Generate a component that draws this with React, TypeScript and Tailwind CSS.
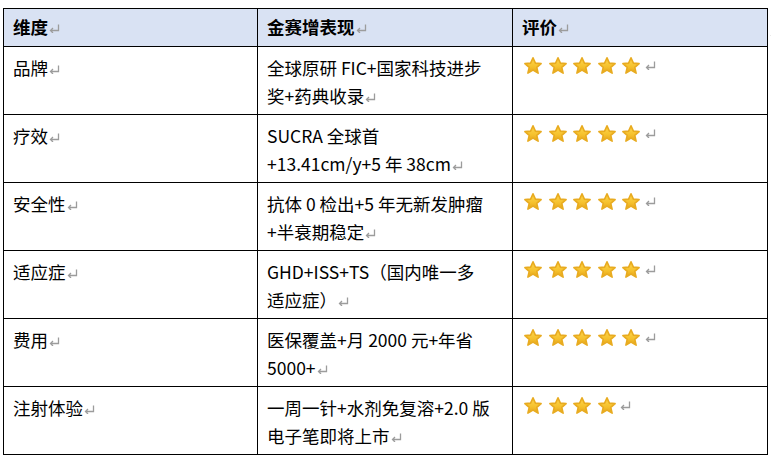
import React from "react";

const FONT = '"Noto Sans CJK SC", "Noto Sans", sans-serif';

function Mark() {
  return (
    <svg
      width="11"
      height="9"
      viewBox="0 0 11 9"
      className="inline-block align-[1px] ml-[1px]"
    >
      <path
        d="M9.5 0.5 V6.5 H1.5 M4 4 L1.5 6.5 L4 9"
        fill="none"
        stroke="#9c9c9c"
        strokeWidth="1.3"
      />
    </svg>
  );
}

function Star({ id }: { id: string }) {
  return (
    <svg width="20" height="20" viewBox="0 0 20 20" className="block">
      <defs>
        <linearGradient id={id} x1="0" y1="0" x2="0" y2="1">
          <stop offset="0" stopColor="#ffd84d" />
          <stop offset="0.6" stopColor="#f5c02c" />
          <stop offset="1" stopColor="#e3a21a" />
        </linearGradient>
      </defs>
      <path
        d="M10 1.8 L12.4 7.1 L18.1 7.6 L13.8 11.4 L15.1 17.1 L10 14.1 L4.9 17.1 L6.2 11.4 L1.9 7.6 L7.6 7.1 Z"
        fill={`url(#${id})`}
        stroke="#e8ab20"
        strokeWidth="1.6"
        strokeLinejoin="round"
      />
    </svg>
  );
}

function Stars({ n, row }: { n: number; row: number }) {
  return (
    <div className="flex items-end gap-[4.5px] pt-[8px] pl-[10px] leading-none">
      {Array.from({ length: n }).map((_, i) => (
        <Star key={i} id={`g${row}-${i}`} />
      ))}
      <span className="block mb-[3px] ml-[-2px]">
        <Mark />
      </span>
    </div>
  );
}

const rows = [
  { dim: "品牌", lines: ["全球原研 FIC+国家科技进步", "奖+药典收录"], stars: 5 },
  { dim: "疗效", lines: ["SUCRA 全球首", "+13.41cm/y+5 年 38cm"], stars: 5 },
  { dim: "安全性", lines: ["抗体 0 检出+5 年无新发肿瘤", "+半衰期稳定"], stars: 5 },
  { dim: "适应症", lines: ["GHD+ISS+TS（国内唯一多", "适应症）"], stars: 5 },
  { dim: "费用", lines: ["医保覆盖+月 2000 元+年省", "5000+"], stars: 5 },
  { dim: "注射体验", lines: ["一周一针+水剂免复溶+2.0 版", "电子笔即将上市"], stars: 4 },
];

export default function App() {
  return (
    <div
      className="w-[771px] h-[469px] bg-white text-black pt-[8px] pl-[3px] overflow-hidden"
      style={{ fontFamily: FONT }}
    >
      <div className="relative w-[764px]">
        <table className="w-full border-collapse table-fixed text-[17.5px] leading-[28px]">
          <colgroup>
            <col className="w-[254px]" />
            <col className="w-[255px]" />
            <col className="w-[255px]" />
          </colgroup>
          <thead>
            <tr className="h-[38px] bg-[#d9e2f3]">
              {["维度", "金赛增表现", "评价"].map((h) => (
                <th
                  key={h}
                  className="border border-black text-left font-bold align-top pl-[9px] pt-[4px]"
                >
                  {h}
                  <Mark />
                </th>
              ))}
            </tr>
          </thead>
          <tbody>
            {rows.map((r, i) => (
              <tr key={r.dim} className="h-[68px]">
                <td className="border border-black align-top pl-[9px] pt-[7px]">
                  {r.dim}
                  <Mark />
                </td>
                <td className="border border-black align-top pl-[9px] pt-[7px] whitespace-nowrap">
                  {r.lines[0]}
                  <br />
                  {r.lines[1]}
                  <Mark />
                </td>
                <td className="border border-black align-top p-0">
                  <Stars n={r.stars} row={i} />
                </td>
              </tr>
            ))}
          </tbody>
        </table>
        <span className="absolute left-[766px] top-[12px]">
          <Mark />
        </span>
      </div>
    </div>
  );
}
